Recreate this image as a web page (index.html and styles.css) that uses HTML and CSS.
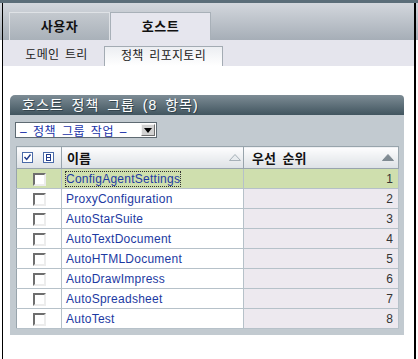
FILE: index.html
```html
<!DOCTYPE html>
<html lang="ko">
<head>
  <meta charset="UTF-8" />
  <title>호스트 정책 그룹</title>
  <link rel="stylesheet" href="styles.css">
</head>
<body>

<div class="app">
  <div class="tabbar">
    <div class="tab">사용자</div>
    <div class="tab active">호스트</div>
  </div>

  <div class="subbar">
    <div class="subtab">도메인 트리</div>
    <div class="subtab active">정책 리포지토리</div>
  </div>

  <main class="content">
    <section class="panel">
      <h2 class="panel-title">호스트 정책 그룹 (8 항목)</h2>
      <div class="panel-body">
        <div class="select">
          <span class="select-text">– 정책 그룹 작업 –</span>
          <span class="select-btn">
            <svg width="8" height="5" viewBox="0 0 8 5"><path d="M0 0H8L4 5Z" fill="#000"/></svg>
          </span>
        </div>

        <table class="grid">
          <colgroup>
            <col class="col-check">
            <col class="col-name">
            <col class="col-prio">
          </colgroup>
          <thead>
            <tr>
              <th>
                <div class="th-check">
                  <svg width="11" height="11" viewBox="0 0 11 11"><rect x=".5" y=".5" width="10" height="10" fill="#fff" stroke="#4a6aa8"/><path d="M2.5 5l2.2 2.5L8.5 2.5" fill="none" stroke="#1f3a8a" stroke-width="1.4"/></svg>
                  <svg width="11" height="11" viewBox="0 0 11 11"><rect x=".5" y=".5" width="10" height="10" fill="#fff" stroke="#4a6aa8"/><rect x="3.5" y="2.5" width="4" height="6" fill="none" stroke="#1f3a8a"/><path d="M3.5 5.5H7.5" stroke="#1f3a8a"/></svg>
                </div>
              </th>
              <th>
                <div class="th-inner">
                  <span>이름</span>
                  <svg width="12" height="7" viewBox="0 0 12 7"><path d="M6 .5L11.5 6.5H.5Z" fill="#e8ecef" stroke="#a6b0b8"/></svg>
                </div>
              </th>
              <th>
                <div class="th-inner prio">
                  <span>우선 순위</span>
                  <svg width="12" height="7" viewBox="0 0 12 7"><path d="M6 .5L11.5 6.5H.5Z" fill="#7f8a92" stroke="#7f8a92"/></svg>
                </div>
              </th>
            </tr>
          </thead>
          <tbody>
            <tr class="selected">
              <td class="td-check"><span class="box"></span></td>
              <td class="td-name"><span class="focus">ConfigAgentSettings</span></td>
              <td class="td-prio">1</td>
            </tr>
            <tr>
              <td class="td-check"><span class="box"></span></td>
              <td class="td-name">ProxyConfiguration</td>
              <td class="td-prio">2</td>
            </tr>
            <tr>
              <td class="td-check"><span class="box"></span></td>
              <td class="td-name">AutoStarSuite</td>
              <td class="td-prio">3</td>
            </tr>
            <tr>
              <td class="td-check"><span class="box"></span></td>
              <td class="td-name">AutoTextDocument</td>
              <td class="td-prio">4</td>
            </tr>
            <tr>
              <td class="td-check"><span class="box"></span></td>
              <td class="td-name">AutoHTMLDocument</td>
              <td class="td-prio">5</td>
            </tr>
            <tr>
              <td class="td-check"><span class="box"></span></td>
              <td class="td-name">AutoDrawImpress</td>
              <td class="td-prio">6</td>
            </tr>
            <tr>
              <td class="td-check"><span class="box"></span></td>
              <td class="td-name">AutoSpreadsheet</td>
              <td class="td-prio">7</td>
            </tr>
            <tr>
              <td class="td-check"><span class="box"></span></td>
              <td class="td-name">AutoTest</td>
              <td class="td-prio">8</td>
            </tr>
          </tbody>
        </table>
      </div>
    </section>
  </main>
</div>

</body>
</html>
```

FILE: styles.css
```css
* { box-sizing: border-box; margin: 0; padding: 0; }

body {
  font-family: "Liberation Sans", "Noto Sans CJK KR", sans-serif;
  font-size: 12px;
  color: #222;
  background: linear-gradient(to bottom, #5b6e79 0, #5b6e79 3px, #d3d7dd 3px, #a6aeb7 40px, #fff 40px);
  min-height: 359px;
  padding-top: 3px;
}

.app {
  margin: 0 2px 0 2px;
  border-left: 1px solid #000;
  border-right: 2px solid #000;
  min-height: 356px;
  background: #fff;
}

/* top tabs */
.tabbar {
  height: 37px;
  display: flex;
  align-items: flex-end;
  padding-left: 6px;
  background: linear-gradient(to bottom, #d3d7dd, #a6aeb7);
}

.tab {
  width: 101px;
  height: 28px;
  line-height: 27px;
  text-align: center;
  font-size: 13px;
  font-weight: bold;
  letter-spacing: 0.5px;
  color: #111;
  background: linear-gradient(to bottom, #c4c9cf, #a9b1b9);
  border: 1px solid #dfe2e6;
  border-bottom: none;
}

.tab.active {
  background: #e6e6ee;
  border-color: #a8b0b8;
}

/* sub tabs */
.subbar {
  height: 26px;
  display: flex;
  align-items: flex-end;
  padding-left: 9px;
  background: #e5e5ed;
}

.subtab {
  width: 89px;
  height: 20px;
  line-height: 19px;
  text-align: center;
  font-size: 12px;
  letter-spacing: 0.3px;
  word-spacing: 2px;
  color: #222;
}

.subtab.active {
  width: 119px;
  margin-left: 3px;
  border: 1px solid #a3abb3;
  border-bottom: none;
  background: linear-gradient(to bottom, #eceef2, #fff);
}

/* panel */
.content {
  padding: 29px 0 0 7px;
}

.panel {
  width: 394px;
}

.panel-title {
  height: 20px;
  line-height: 20px;
  padding-left: 12px;
  font-size: 14px;
  font-weight: normal;
  letter-spacing: 1px;
  word-spacing: 3px;
  color: #fff;
  text-shadow: 1px 1px 0 #33444d;
  background: linear-gradient(to bottom, #7d8c95, #41555f);
  border-radius: 5px 4px 0 0;
}

.panel-body {
  background: #c2cad0;
  padding: 7px 6px 6px 6px;
}

.select {
  width: 142px;
  height: 16px;
  margin-left: -1px;
  margin-bottom: 8px;
  display: flex;
  align-items: center;
  justify-content: space-between;
  background: #fff;
  border: 1px solid #5e6a72;
  padding: 0 1px 0 4px;
}

.select-text {
  color: #1832a8;
  font-size: 12px;
  letter-spacing: 0.5px;
  word-spacing: 2px;
}

.select-btn {
  width: 14px;
  height: 12px;
  display: flex;
  align-items: center;
  justify-content: center;
  background: #d2d2d2;
  border: 1px solid;
  border-color: #f4f4f4 #707070 #707070 #f4f4f4;
}

/* table */
.grid {
  width: 382px;
  border-collapse: collapse;
  table-layout: fixed;
  background: #fff;
  border: 1px solid #98a4ac;
}

.col-check { width: 45px; }
.col-name { width: 182px; }
.col-prio { width: 155px; }

.grid th {
  height: 22px;
  padding: 0;
  text-align: left;
  font-size: 13px;
  font-weight: bold;
  color: #111;
  background: linear-gradient(to bottom, #fdfdfe, #dde1e5);
  border: 1px solid #98a4ac;
}

.th-check {
  display: flex;
  align-items: center;
  gap: 10px;
  padding-left: 5px;
}

.th-inner {
  display: flex;
  align-items: center;
  justify-content: space-between;
  padding: 0 2px 0 5px;
}

.th-inner.prio {
  padding: 0 4px 0 8px;
  word-spacing: 3px;
}

.grid td {
  height: 20px;
  padding: 0;
  border-bottom: 1px solid #b6c1c9;
  border-right: 1px solid #b6c1c9;
}

.td-check {
  text-align: center;
}

.box {
  display: inline-block;
  width: 13px;
  height: 13px;
  vertical-align: middle;
  background: #fff;
  border: 2px solid;
  border-color: #6e6e6e #ececec #ececec #6e6e6e;
}

.grid td.td-name {
  padding-left: 4px;
  color: #1d3aa2;
  letter-spacing: 0.25px;
}

.focus {
  outline: 1px dotted #333;
}

.grid td.td-prio {
  text-align: right;
  padding-right: 5px;
  color: #333;
  background: #ede9ef;
}

.grid tr.selected td {
  background: #cfdfae;
}
```
